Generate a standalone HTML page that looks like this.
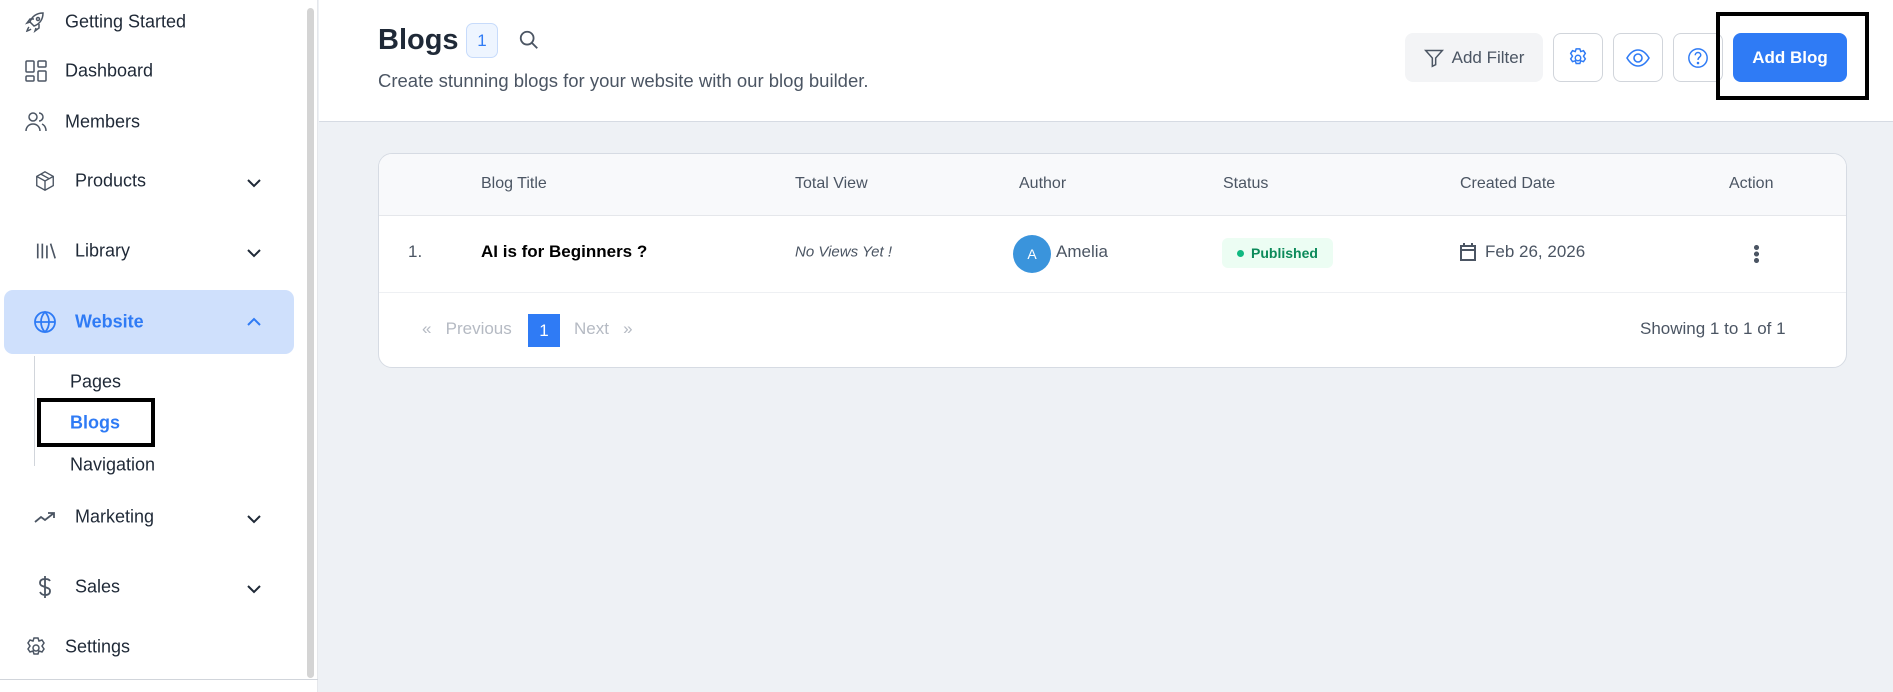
<!DOCTYPE html>
<html><head><meta charset="utf-8"><style>
*{box-sizing:border-box;margin:0;padding:0}
body{width:1893px;height:692px;overflow:hidden;background:#eef1f5;font-family:"Liberation Sans",sans-serif;position:relative;color:#1f2937}
.abs{position:absolute}
.sb{left:0;top:0;width:318px;height:692px;background:#fff;border-right:1px solid #e5e7eb}
.it{position:absolute;font-size:18px;color:#1f2937;display:flex;align-items:center;transform:translateY(-50%)}
.ic{position:absolute;transform:translateY(-50%)}
svg{display:block}
.chev{position:absolute;left:246px;transform:translateY(-50%)}
.th{position:absolute;top:184px;transform:translateY(-50%);font-size:16px;color:#4b5563}
.td{position:absolute;top:252px;transform:translateY(-50%);font-size:17px}
.btn{position:absolute;top:33px;height:49px;border-radius:8px;display:flex;align-items:center;justify-content:center}
.ib{width:50px;background:#fff;border:1px solid #d1d5db}
</style></head><body>
<div class="abs sb"></div>
<div class="abs" style="left:307px;top:8px;width:7px;height:670px;background:#d4d4d4;border-radius:4px"></div>
<div class="abs" style="left:0;top:679px;width:318px;height:1px;background:#d1d5db"></div>

<svg class="ic" style="left:24px;top:22px" width="24" height="24" viewBox="0 0 24 24" fill="none" stroke="#4b5563" stroke-width="1.5"><path d="M9 15l-3-3c2-6 7-9 13-9 0 6-3 11-9 13z"/><circle cx="14" cy="9" r="1.5"/><path d="M6 12l-3 1 3-4h4M12 18l-1 3 4-3v-4M5 17c-1 1-2 4-2 4s3-1 4-2"/></svg>
<div class="it" style="left:65px;top:22px">Getting Started</div>
<svg class="ic" style="left:24px;top:71px" width="24" height="24" viewBox="0 0 24 24" fill="none" stroke="#4b5563" stroke-width="1.5"><rect x="2" y="2" width="8" height="11" rx="1"/><rect x="14" y="2" width="8" height="6" rx="1"/><rect x="14" y="12" width="8" height="10" rx="1"/><rect x="2" y="17" width="8" height="5" rx="1"/></svg>
<div class="it" style="left:65px;top:71px">Dashboard</div>
<svg class="ic" style="left:24px;top:122px" width="24" height="24" viewBox="0 0 24 24" fill="none" stroke="#4b5563" stroke-width="1.5"><circle cx="9" cy="7" r="4"/><path d="M2 21c0-4 3-7 7-7s7 3 7 7M15 3a4 4 0 010 8M18 14c2 1 4 3 4 7"/></svg>
<div class="it" style="left:65px;top:122px">Members</div>

<svg class="ic" style="left:34px;top:181px" width="22" height="22" viewBox="0 0 24 24" fill="none" stroke="#4b5563" stroke-width="1.5"><path d="M12 2l9 5v10l-9 5-9-5V7z M3 7l9 5 9-5M12 12v10M7.5 4.5l9 5"/></svg>
<div class="it" style="left:75px;top:181px">Products</div>
<svg class="chev" style="top:183px" width="16" height="10" viewBox="0 0 16 10" fill="none" stroke="#1f2937" stroke-width="2"><path d="M2 2l6 6 6-6"/></svg>

<svg class="ic" style="left:35px;top:251px" width="22" height="22" viewBox="0 0 24 24" fill="none" stroke="#4b5563" stroke-width="1.8"><path d="M3 4v16M8 4v16M13 6v14M17 4l5 16"/></svg>
<div class="it" style="left:75px;top:251px">Library</div>
<svg class="chev" style="top:253px" width="16" height="10" viewBox="0 0 16 10" fill="none" stroke="#1f2937" stroke-width="2"><path d="M2 2l6 6 6-6"/></svg>

<div class="abs" style="left:4px;top:290px;width:290px;height:64px;background:#cfe0fc;border-radius:9px"></div>
<svg class="ic" style="left:33px;top:322px" width="24" height="24" viewBox="0 0 24 24" fill="none" stroke="#2f7bf5" stroke-width="1.8"><circle cx="12" cy="12" r="10"/><path d="M2 12h20M12 2c3 3 4 6 4 10s-1 7-4 10c-3-3-4-6-4-10s1-7 4-10z"/></svg>
<div class="it" style="left:75px;top:322px;color:#2f7bf5;font-weight:bold">Website</div>
<svg class="chev" style="top:322px" width="16" height="10" viewBox="0 0 16 10" fill="none" stroke="#2f7bf5" stroke-width="2"><path d="M2 8l6-6 6 6"/></svg>

<div class="abs" style="left:34px;top:356px;width:1px;height:110px;background:#d1d5db"></div>
<div class="it" style="left:70px;top:382px">Pages</div>
<div class="it" style="left:70px;top:423px;color:#2f7bf5;font-weight:bold">Blogs</div>
<div class="abs" style="left:37px;top:398px;width:118px;height:49px;border:4px solid #000"></div>
<div class="it" style="left:70px;top:465px">Navigation</div>

<svg class="ic" style="left:33px;top:517px" width="24" height="24" viewBox="0 0 24 24" fill="none" stroke="#4b5563" stroke-width="1.8"><path d="M2 17l6-5 4 3 9-7M15 8h6v5"/></svg>
<div class="it" style="left:75px;top:517px">Marketing</div>
<svg class="chev" style="top:519px" width="16" height="10" viewBox="0 0 16 10" fill="none" stroke="#1f2937" stroke-width="2"><path d="M2 2l6 6 6-6"/></svg>

<svg class="ic" style="left:35px;top:587px" width="20" height="24" viewBox="0 0 20 24" fill="none" stroke="#4b5563" stroke-width="1.8"><path d="M10 1v22M15 6c-1-2-3-2-5-2-3 0-5 1-5 4s3 3 5 4 5 1 5 4-2 4-5 4c-2 0-4-1-5-3"/></svg>
<div class="it" style="left:75px;top:587px">Sales</div>
<svg class="chev" style="top:589px" width="16" height="10" viewBox="0 0 16 10" fill="none" stroke="#1f2937" stroke-width="2"><path d="M2 2l6 6 6-6"/></svg>

<svg class="ic" style="left:24px;top:648px" width="24" height="24" viewBox="0 0 24 24" fill="none" stroke="#4b5563" stroke-width="1.5"><circle cx="12" cy="12" r="3"/><path d="M10 2h4l1 3 3-1 2 3-2 3 2 3-2 3-3-1-1 3h-4l-1-3-3 1-2-3 2-3-2-3 2-3 3 1z"/></svg>
<div class="it" style="left:65px;top:647px">Settings</div>

<div class="abs" style="left:319px;top:0;width:1574px;height:122px;background:#fff;border-bottom:1px solid #d6dbe3"></div>
<div class="abs" style="left:378px;top:24px;font-size:29px;font-weight:bold;color:#1f2937">Blogs</div>
<div class="abs" style="left:466px;top:23px;width:32px;height:35px;border:1px solid #c7dbfb;background:#eef5ff;border-radius:7px;color:#2f7bf5;font-size:17px;display:flex;align-items:center;justify-content:center">1</div>
<svg class="abs" style="left:518px;top:29px" width="22" height="22" viewBox="0 0 24 24" fill="none" stroke="#4b5563" stroke-width="2"><circle cx="10" cy="10" r="7"/><path d="M15 15l6 6"/></svg>
<div class="abs" style="left:378px;top:70px;font-size:18.5px;color:#4b5563">Create stunning blogs for your website with our blog builder.</div>

<div class="btn" style="left:1405px;width:138px;background:#f3f4f6;color:#4b5563;font-size:17px;gap:8px"><svg width="20" height="20" viewBox="0 0 24 24" fill="none" stroke="#4b5563" stroke-width="1.8"><path d="M2 3h20l-8 9v8l-4 2v-10z"/></svg>Add Filter</div>
<div class="btn ib" style="left:1553px"><svg width="22" height="22" viewBox="0 0 24 24" fill="none" stroke="#2f7bf5" stroke-width="1.6"><circle cx="12" cy="12" r="3"/><path d="M10 2h4l1 3 3-1 2 3-2 3 2 3-2 3-3-1-1 3h-4l-1-3-3 1-2-3 2-3-2-3 2-3 3 1z"/></svg></div>
<div class="btn ib" style="left:1613px"><svg width="24" height="20" viewBox="0 0 24 20" fill="none" stroke="#2f7bf5" stroke-width="1.6"><path d="M1 10c3-5 7-8 11-8s8 3 11 8c-3 5-7 8-11 8S4 15 1 10z"/><circle cx="12" cy="10" r="4"/></svg></div>
<div class="btn ib" style="left:1673px"><svg width="22" height="22" viewBox="0 0 24 24" fill="none" stroke="#2f7bf5" stroke-width="1.6"><circle cx="12" cy="12" r="10"/><path d="M9 9a3 3 0 016 0c0 2-3 2-3 5"/><circle cx="12" cy="17.5" r=".6" fill="#2f7bf5"/></svg></div>
<div class="btn" style="left:1733px;width:114px;background:#2f7bf5;color:#fff;font-weight:bold;font-size:17px">Add Blog</div>
<div class="abs" style="left:1716px;top:12px;width:153px;height:88px;border:4px solid #000"></div>

<div class="abs" style="left:378px;top:153px;width:1469px;height:215px;background:#fff;border:1px solid #d6dbe3;border-radius:14px;overflow:hidden">
 <div style="height:62px;background:#f8f9fb;border-bottom:1px solid #e5e7eb"></div>
 <div style="height:77px;border-bottom:1px solid #eef0f3"></div>
</div>
<div class="th" style="left:481px">Blog Title</div>
<div class="th" style="left:795px">Total View</div>
<div class="th" style="left:1019px">Author</div>
<div class="th" style="left:1223px">Status</div>
<div class="th" style="left:1460px">Created Date</div>
<div class="th" style="left:1729px">Action</div>

<div class="td" style="left:408px;color:#4b5563">1.</div>
<div class="td" style="left:481px;font-weight:bold;color:#000">AI is for Beginners ?</div>
<div class="td" style="left:795px;font-style:italic;color:#4b5563;font-size:15px">No Views Yet !</div>
<div class="abs" style="left:1013px;top:235px;width:38px;height:38px;border-radius:50%;background:#3a94dc;color:#fff;font-size:14px;display:flex;align-items:center;justify-content:center">A</div>
<div class="td" style="left:1056px;color:#4b5563">Amelia</div>
<div class="abs" style="left:1222px;top:238px;width:111px;height:30px;background:#ecfdf3;border-radius:6px;color:#0b8a5a;font-weight:bold;font-size:14px;display:flex;align-items:center;justify-content:center;gap:7px"><span style="width:7px;height:7px;border-radius:50%;background:#10b981;display:inline-block"></span>Published</div>
<svg class="abs" style="left:1459px;top:242px" width="18" height="20" viewBox="0 0 18 20" fill="none" stroke="#4b5563" stroke-width="2"><rect x="2" y="4" width="14" height="14"/><path d="M2 8h14M5 1v4M13 1v4"/></svg>
<div class="td" style="left:1485px;color:#4b5563">Feb 26, 2026</div>
<div class="abs" style="left:1754px;top:245px;width:5px;height:18px;background:radial-gradient(circle at 2.5px 2.5px,#4b5563 2.4px,transparent 2.6px) 0 0/5px 6.5px repeat-y"></div>

<div class="abs" style="left:422px;top:319px;font-size:17px;color:#b5bac3">«&nbsp;&nbsp;&nbsp;Previous</div>
<div class="abs" style="left:528px;top:314px;width:32px;height:33px;background:#2f7bf5;color:#fff;font-size:17px;display:flex;align-items:center;justify-content:center">1</div>
<div class="abs" style="left:574px;top:319px;font-size:17px;color:#b5bac3">Next&nbsp;&nbsp;&nbsp;»</div>
<div class="abs" style="left:1640px;top:319px;font-size:17px;color:#4b5563">Showing 1 to 1 of 1</div>
</body></html>
